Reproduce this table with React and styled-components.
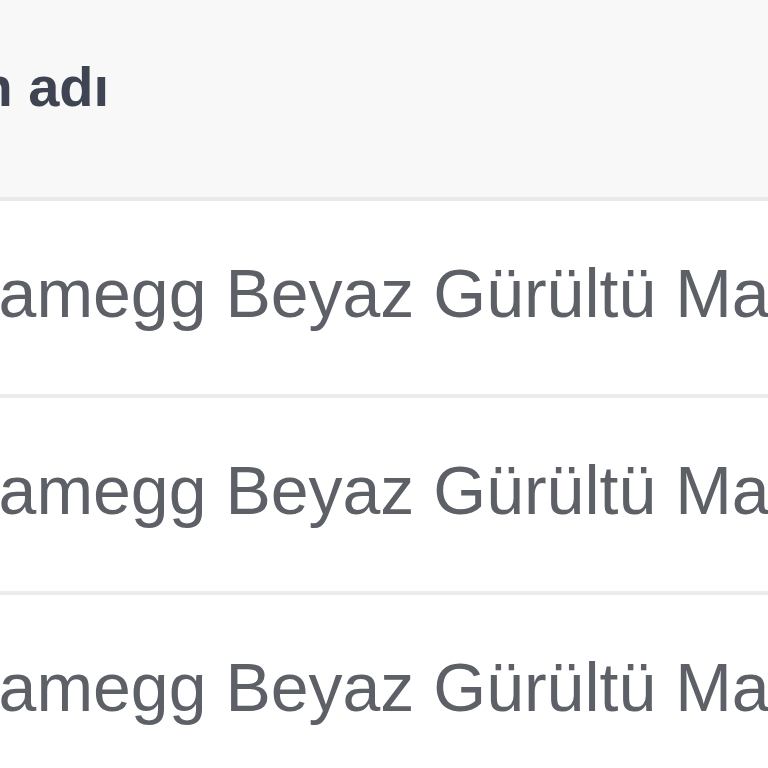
import React from 'react'
import styled, {createGlobalStyle} from 'styled-components'

const Global = createGlobalStyle`
    html, body {
        margin: 0;
        padding: 0;
        background: #ffffff;
        overflow: hidden;
    }
    body {
        font-family: "Liberation Sans", Arial, sans-serif;
    }
`

const Viewport = styled.div`
    width: 768px;
    height: 768px;
    overflow: hidden;
`

const Table = styled.div`
    display: flex;
    flex-direction: column;
    width: 1400px;
    margin-left: -111px;
`

const HeadRow = styled.div`
    display: flex;
    align-items: center;
    height: 201px;
    background-color: #f8f8f9;
    border-bottom: 4px solid #e9e9eb;
    box-sizing: border-box;
`

const HeadCell = styled.div`
    font-size: 56px;
    font-weight: 700;
    color: #3f4452;
    white-space: nowrap;
    margin-left: -7px;
    padding-bottom: 24px;
`

const Row = styled.div`
    display: flex;
    align-items: center;
    height: 197px;
    border-bottom: 4px solid #ececee;
    box-sizing: border-box;
`

const Cell = styled.div`
    font-size: 68px;
    color: #5d6067;
    white-space: nowrap;
    padding-bottom: 10px;
`

const products = [
    'Dreamegg Beyaz Gürültü Makinesi',
    'Dreamegg Beyaz Gürültü Makinesi',
    'Dreamegg Beyaz Gürültü Makinesi',
]

export default function App() {
    return (
        <Viewport>
            <Global />
            <Table>
                <HeadRow>
                    <HeadCell>Ürün adı</HeadCell>
                </HeadRow>
                {products.map((name, index) => (
                    <Row key={index}>
                        <Cell>{name}</Cell>
                    </Row>
                ))}
            </Table>
        </Viewport>
    )
}
